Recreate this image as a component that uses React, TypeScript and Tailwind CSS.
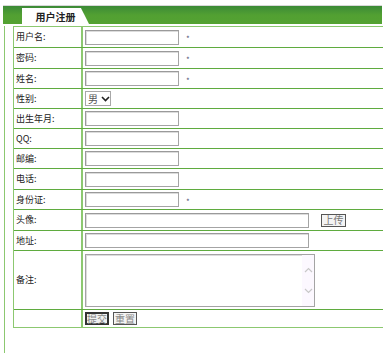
const font = "font-['SimSun','Noto_Sans_CJK_SC',sans-serif]";

type Row = {
  label: string;
  h: string;
  kind: "text" | "wide" | "upload" | "select" | "area" | "buttons";
  star?: boolean;
};

const rows: Row[] = [
  { label: "用户名:", h: "h-[21px]", kind: "text", star: true },
  { label: "密码:", h: "h-[21px]", kind: "text", star: true },
  { label: "姓名:", h: "h-[20px]", kind: "text", star: true },
  { label: "性别:", h: "h-[20px]", kind: "select" },
  { label: "出生年月:", h: "h-[20px]", kind: "text" },
  { label: "QQ:", h: "h-[20px]", kind: "text" },
  { label: "邮编:", h: "h-[20px]", kind: "text" },
  { label: "电话:", h: "h-[21px]", kind: "text" },
  { label: "身份证:", h: "h-[20px]", kind: "text", star: true },
  { label: "头像:", h: "h-[21px]", kind: "upload" },
  { label: "地址:", h: "h-[20px]", kind: "wide" },
  { label: "备注:", h: "h-[59px]", kind: "area" },
  { label: "", h: "h-[19px]", kind: "buttons" },
];

const inputCls =
  "h-[15px] border border-[#a4a4a4] border-t-[#9a9a9a] border-l-[#9a9a9a] shadow-[inset_1px_1px_0_#dcdcdc] bg-white";

function Cell({ row }: { row: Row }) {
  switch (row.kind) {
    case "text":
      return (
        <div className="flex items-center">
          <div className={`${inputCls} w-[94px]`} />
          {row.star && <span className="ml-[7px] mt-[4px] text-[8px] text-[#557]">*</span>}
        </div>
      );
    case "select":
      return (
        <div className="flex h-[15px] w-[26px] items-center border border-[#a8a8a8] pl-[2px] text-[10px] text-[#555]">
          男
          <svg width="9" height="6" viewBox="0 0 9 6" className="ml-[3px]">
            <path d="M1 1l3.5 3.5L8 1" fill="none" stroke="#222" strokeWidth="1.6" />
          </svg>
        </div>
      );
    case "wide":
      return <div className={`${inputCls} w-[224px]`} />;
    case "upload":
      return (
        <div className="flex items-center">
          <div className={`${inputCls} w-[224px]`} />
          <div className="ml-[12px] flex h-[13px] w-[25px] items-center justify-center border border-[#555] bg-[#f4f4f4] text-[10px] leading-none text-[#777]">
            上传
          </div>
        </div>
      );
    case "area":
      return (
        <div className="flex h-[53px] w-[230px] justify-end border border-[#a4a4a4] shadow-[inset_1px_1px_0_#dcdcdc] bg-white">
          <div className="flex w-[12px] flex-col items-center justify-between bg-[#fcf8ff] py-[12px]">
            <svg width="9" height="6" viewBox="0 0 9 6">
              <path d="M1 5l3.5-3.5L8 5" fill="none" stroke="#c8c8c8" strokeWidth="1.2" />
            </svg>
            <svg width="9" height="6" viewBox="0 0 9 6">
              <path d="M1 1l3.5 3.5L8 1" fill="none" stroke="#c8c8c8" strokeWidth="1.2" />
            </svg>
          </div>
        </div>
      );
    case "buttons":
      return (
        <div className="flex items-center gap-[4px]">
          <div className="flex h-[13px] w-[24px] items-center justify-center border-2 border-[#333] bg-[#f0f0f0] text-[10px] leading-none text-[#888]">
            提交
          </div>
          <div className="flex h-[13px] w-[24px] items-center justify-center border border-[#555] bg-[#f4f4f4] text-[10px] leading-none text-[#888]">
            重置
          </div>
        </div>
      );
  }
}

export default function App() {
  return (
    <div className={`h-[353px] w-[390px] overflow-hidden bg-white ${font}`}>
      {/* title bar */}
      <div className="ml-[3px] mt-[5px] w-[379px] border-t border-[#d8d8d8]">
        <div className="flex h-[18px] items-end bg-gradient-to-b from-[#3b8a36] via-[#52a032] to-[#54a232] pl-[19px]">
          <div className="flex h-[16px] w-[67px] items-center justify-center bg-white text-[10px] font-bold text-[#222] [clip-path:polygon(0_0,88%_0,100%_100%,0_100%)]">
            用户注册
          </div>
        </div>
      </div>

      {/* content frame */}
      <div className="ml-[4px] mt-[2px] h-[330px] border-l border-[#8cc870] pl-[8px]">
        <div className="w-[370px] border-l border-[#8cc870]">
          {rows.map((row, i) => (
            <div
              key={i}
              className={`flex ${row.h} border-t ${i === 0 ? "border-[#8cc870]" : "border-[#5fab3f]"} ${
                i === rows.length - 1 ? "border-b border-b-[#8cc870]" : ""
              }`}
            >
              <div className="flex w-[67px] items-center pl-[2px] text-[9px] text-[#222]">{row.label}</div>
              <div className="flex flex-1 items-center border-l-2 border-[#8cc870] pl-[2px]">
                <Cell row={row} />
              </div>
            </div>
          ))}
        </div>
      </div>
    </div>
  );
}
